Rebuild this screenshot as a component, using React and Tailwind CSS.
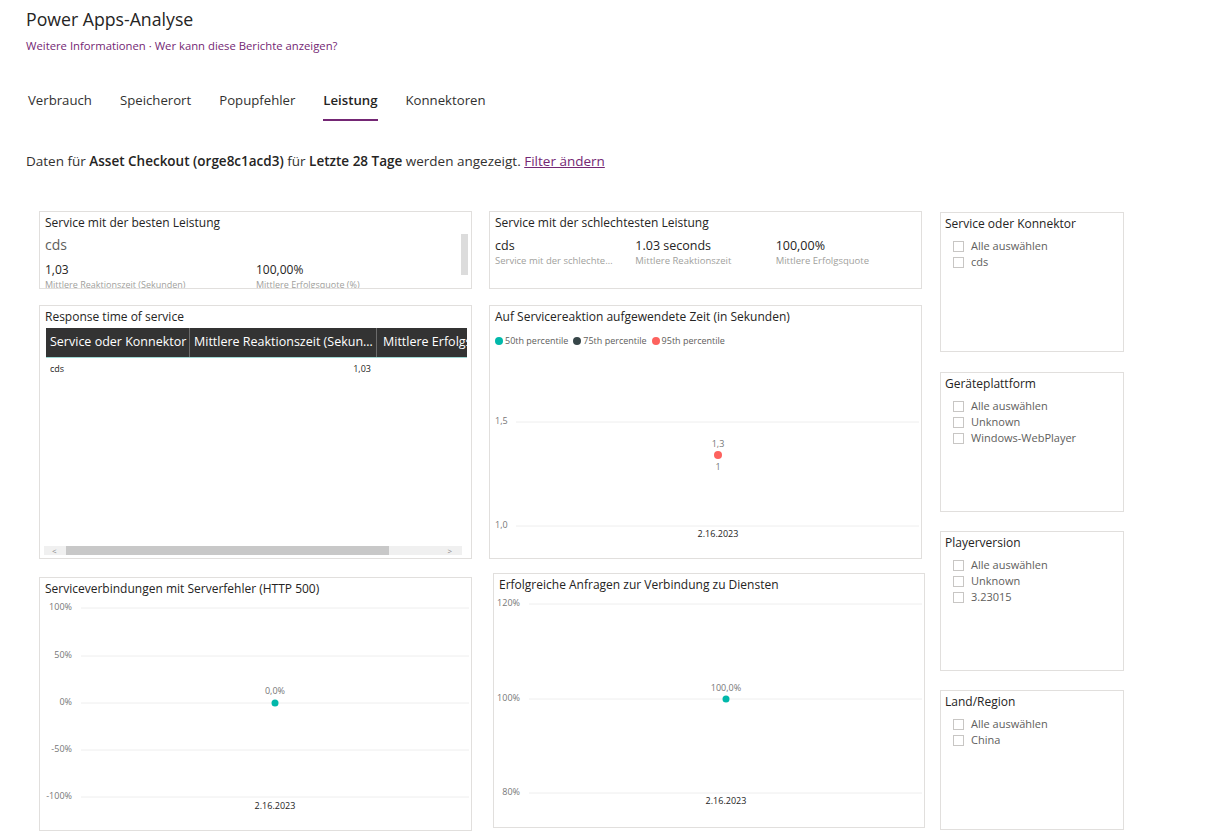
import React from "react";

const font = { fontFamily: '"Segoe UI", "Open Sans", "Noto Sans", sans-serif' };

const TABS = ["Verbrauch", "Speicherort", "Popupfehler", "Leistung", "Konnektoren"];

export default function App() {
  return (
    <div className="min-h-[833px] w-[1208px] bg-white text-[#252423]" style={font}>
      <div className="px-[26px] pt-[7px]">
        <h1 className="text-[17.7px] leading-[24px] font-normal">Power Apps-Analyse</h1>
        <div className="mt-[7px] text-[11.3px] leading-[16px] text-[#742774]">
          Weitere Informationen · Wer kann diese Berichte anzeigen?
        </div>

        {/* tabs */}
        <div className="mt-[36px] flex items-start gap-[28px] pl-[2px]">
          {TABS.map((t) => (
            <div key={t} className="flex flex-col items-center">
              <div
                className={
                  "text-[13.2px] leading-[20px] " +
                  (t === "Leistung" ? "font-semibold text-[#252423]" : "text-[#323130]")
                }
              >
                {t}
              </div>
              <div
                className={
                  "mt-[9px] h-[2px] self-stretch " + (t === "Leistung" ? "bg-[#742774]" : "bg-transparent")
                }
              />
            </div>
          ))}
        </div>

        <div className="mt-[30px] text-[13.5px] leading-[20px] text-[#323130]">
          Daten für <span className="font-semibold text-[#252423]">Asset Checkout (orge8c1acd3)</span> für{" "}
          <span className="font-semibold text-[#252423]">Letzte 28 Tage</span> werden angezeigt.{" "}
          <span className="text-[#742774] underline">Filter ändern</span>
        </div>
      </div>

      {/* report canvas */}
      <div className="mt-[40px] flex items-start pl-[39px]">
        {/* left column */}
        <div className="flex w-[433px] flex-col">
          <BestCard />
          <TableCard />
          <ChartHttp500 />
        </div>

        {/* middle column */}
        <div className="ml-[17px] flex w-[433px] flex-col">
          <WorstCard />
          <ChartResponse />
          <ChartSuccess />
        </div>

        {/* slicers */}
        <div className="ml-[18px] mt-[1px] flex w-[184px] flex-col">
          <Slicer title="Service oder Konnektor" items={["Alle auswählen", "cds"]} />
          <Slicer className="mt-[20px]" title="Geräteplattform" items={["Alle auswählen", "Unknown", "Windows-WebPlayer"]} />
          <Slicer className="mt-[19px]" title="Playerversion" items={["Alle auswählen", "Unknown", "3.23015"]} />
          <Slicer className="mt-[19px]" title="Land/Region" items={["Alle auswählen", "China"]} />
        </div>
      </div>
    </div>
  );
}

/* ---------- cards ---------- */

function Card({ className = "", children }) {
  return (
    <div className={"relative overflow-hidden border border-[#e1dfdd] bg-white " + className}>{children}</div>
  );
}

function CardTitle({ children }) {
  return <div className="px-[5px] pt-[3px] text-[12px] leading-[16px] text-[#252423]">{children}</div>;
}

function BestCard() {
  return (
    <Card className="h-[78px]">
      <CardTitle>Service mit der besten Leistung</CardTitle>
      <div className="px-[5px] pt-[5px] text-[14px] leading-[18px] text-[#605e5c]">cds</div>
      <div className="flex px-[5px] pt-[8px]">
        <div className="w-[211px]">
          <div className="text-[12px] leading-[15px]">1,03</div>
          <div className="mt-[2px] text-[9px] leading-[12px] text-[#a19f9d]">Mittlere Reaktionszeit (Sekunden)</div>
        </div>
        <div>
          <div className="text-[12px] leading-[15px]">100,00%</div>
          <div className="mt-[2px] text-[9px] leading-[12px] text-[#a19f9d]">Mittlere Erfolgsquote (%)</div>
        </div>
      </div>
      <div className="absolute right-[3px] top-[22px] h-[41px] w-[7px] bg-[#dcdcdc]" />
    </Card>
  );
}

function WorstCard() {
  const cols = [
    ["cds", "Service mit der schlechte…"],
    ["1.03 seconds", "Mittlere Reaktionszeit"],
    ["100,00%", "Mittlere Erfolgsquote"],
  ];
  return (
    <Card className="h-[78px]">
      <CardTitle>Service mit der schlechtesten Leistung</CardTitle>
      <div className="flex px-[5px] pt-[7px]">
        {cols.map(([v, l]) => (
          <div key={v} className="w-[141px]">
            <div className="text-[12.5px] leading-[16px] text-[#252423]">{v}</div>
            <div className="text-[9.5px] leading-[14px] text-[#a19f9d]">{l}</div>
          </div>
        ))}
      </div>
    </Card>
  );
}

function TableCard() {
  return (
    <Card className="mt-[16px] h-[254px]">
      <CardTitle>Response time of service</CardTitle>
      <div className="ml-[6px] mt-[3px] w-[421px] overflow-hidden">
        <div className="flex h-[30px] w-[560px] items-center whitespace-nowrap border-b border-[#9fd8d3] bg-[#333333] text-[12.5px] text-white">
          <div className="w-[143px] overflow-hidden px-[4px]">Service oder Konnektor</div>
          <div className="h-full w-px bg-[#6b6b6b]" />
          <div className="w-[186px] overflow-hidden px-[4px]">Mittlere Reaktionszeit (Sekun…</div>
          <div className="h-full w-px bg-[#6b6b6b]" />
          <div className="px-[6px]">Mittlere Erfolgsquote (%)</div>
        </div>
        <div className="flex h-[22px] items-center text-[9px] text-[#252423]">
          <div className="w-[144px] px-[4px]">cds</div>
          <div className="w-[186px] px-[5px] text-right">1,03</div>
        </div>
      </div>
      <div className="absolute bottom-[3px] left-[4px] flex h-[9px] w-[418px] items-center bg-[#f0f0f0] text-[8px] leading-none text-[#888]">
        <span className="w-[22px] pl-[8px]">&lt;</span>
        <div className="h-full w-[323px] bg-[#c8c8c8]" />
        <span className="ml-auto pr-[10px]">&gt;</span>
      </div>
    </Card>
  );
}

function Legend() {
  const items = [
    ["#01b8aa", "50th percentile"],
    ["#374649", "75th percentile"],
    ["#fd625e", "95th percentile"],
  ];
  return (
    <div className="flex items-center gap-[5px] whitespace-nowrap px-[5px] pt-[10px] text-[9px] leading-[12px] text-[#605e5c]">
      {items.map(([c, l]) => (
        <div key={l} className="flex items-center gap-[2px]">
          <span className="inline-block h-[8px] w-[8px] shrink-0 rounded-full" style={{ background: c }} />
          <span>{l}</span>
        </div>
      ))}
    </div>
  );
}

function ChartResponse() {
  return (
    <Card className="mt-[16px] h-[254px]">
      <CardTitle>Auf Servicereaktion aufgewendete Zeit (in Sekunden)</CardTitle>
      <Legend />
      <svg className="absolute inset-0" width="433" height="254" style={font}>
        <line x1="26" x2="429" y1="116" y2="116" stroke="#eeeeee" />
        <line x1="26" x2="429" y1="220" y2="220" stroke="#eeeeee" />
        <text x="5" y="116" dominantBaseline="middle" fontSize="9" fill="#777">1,5</text>
        <text x="5" y="220" dominantBaseline="middle" fontSize="9" fill="#777">1,0</text>
        <text x="228" y="139" textAnchor="middle" dominantBaseline="middle" fontSize="9" fill="#777">1,3</text>
        <circle cx="228" cy="149" r="4" fill="#fd625e" />
        <text x="228" y="162" textAnchor="middle" dominantBaseline="middle" fontSize="9" fill="#777">1</text>
        <text x="228" y="229" textAnchor="middle" dominantBaseline="middle" fontSize="9" fill="#252423">2.16.2023</text>
      </svg>
    </Card>
  );
}

function ChartHttp500() {
  const ticks = [
    ["100%", 30],
    ["50%", 78],
    ["0%", 125],
    ["-50%", 172],
    ["-100%", 219],
  ];
  return (
    <Card className="mt-[18px] h-[254px]">
      <CardTitle>Serviceverbindungen mit Serverfehler (HTTP 500)</CardTitle>
      <svg className="absolute inset-0" width="433" height="254" style={font}>
        {ticks.map(([l, y]) => (
          <g key={l}>
            <line x1="41" x2="429" y1={y} y2={y} stroke="#eeeeee" />
            <text x="32" y={y} textAnchor="end" dominantBaseline="middle" fontSize="9" fill="#777">{l}</text>
          </g>
        ))}
        <text x="235" y="114" textAnchor="middle" dominantBaseline="middle" fontSize="9" fill="#777">0,0%</text>
        <circle cx="235" cy="125" r="3.5" fill="#01b8aa" />
        <text x="235" y="229" textAnchor="middle" dominantBaseline="middle" fontSize="9" fill="#252423">2.16.2023</text>
      </svg>
    </Card>
  );
}

function ChartSuccess() {
  const ticks = [
    ["120%", 30],
    ["100%", 125],
    ["80%", 219],
  ];
  return (
    <Card className="ml-[4px] mt-[14px] h-[255px] w-[432px]">
      <CardTitle>Erfolgreiche Anfragen zur Verbindung zu Diensten</CardTitle>
      <svg className="absolute inset-0" width="432" height="255" style={font}>
        {ticks.map(([l, y]) => (
          <g key={l}>
            <line x1="35" x2="428" y1={y} y2={y} stroke="#eeeeee" />
            <text x="26" y={y} textAnchor="end" dominantBaseline="middle" fontSize="9" fill="#777">{l}</text>
          </g>
        ))}
        <text x="232" y="115" textAnchor="middle" dominantBaseline="middle" fontSize="9" fill="#777">100,0%</text>
        <circle cx="232" cy="125" r="3.5" fill="#01b8aa" />
        <text x="232" y="228" textAnchor="middle" dominantBaseline="middle" fontSize="9" fill="#252423">2.16.2023</text>
      </svg>
    </Card>
  );
}

/* ---------- slicers ---------- */

function Slicer({ title, items, className = "" }) {
  return (
    <div className={"h-[140px] border border-[#e1dfdd] bg-white " + className}>
      <div className="px-[4px] pt-[3px] text-[12px] leading-[16px] text-[#252423]">{title}</div>
      <div className="mt-[6px] flex flex-col">
        {items.map((it) => (
          <div key={it} className="flex h-[16px] items-center pl-[12px]">
            <span className="h-[11px] w-[11px] border border-[#c8c6c4]" />
            <span className="ml-[7px] text-[11px] text-[#605e5c]">{it}</span>
          </div>
        ))}
      </div>
    </div>
  );
}
